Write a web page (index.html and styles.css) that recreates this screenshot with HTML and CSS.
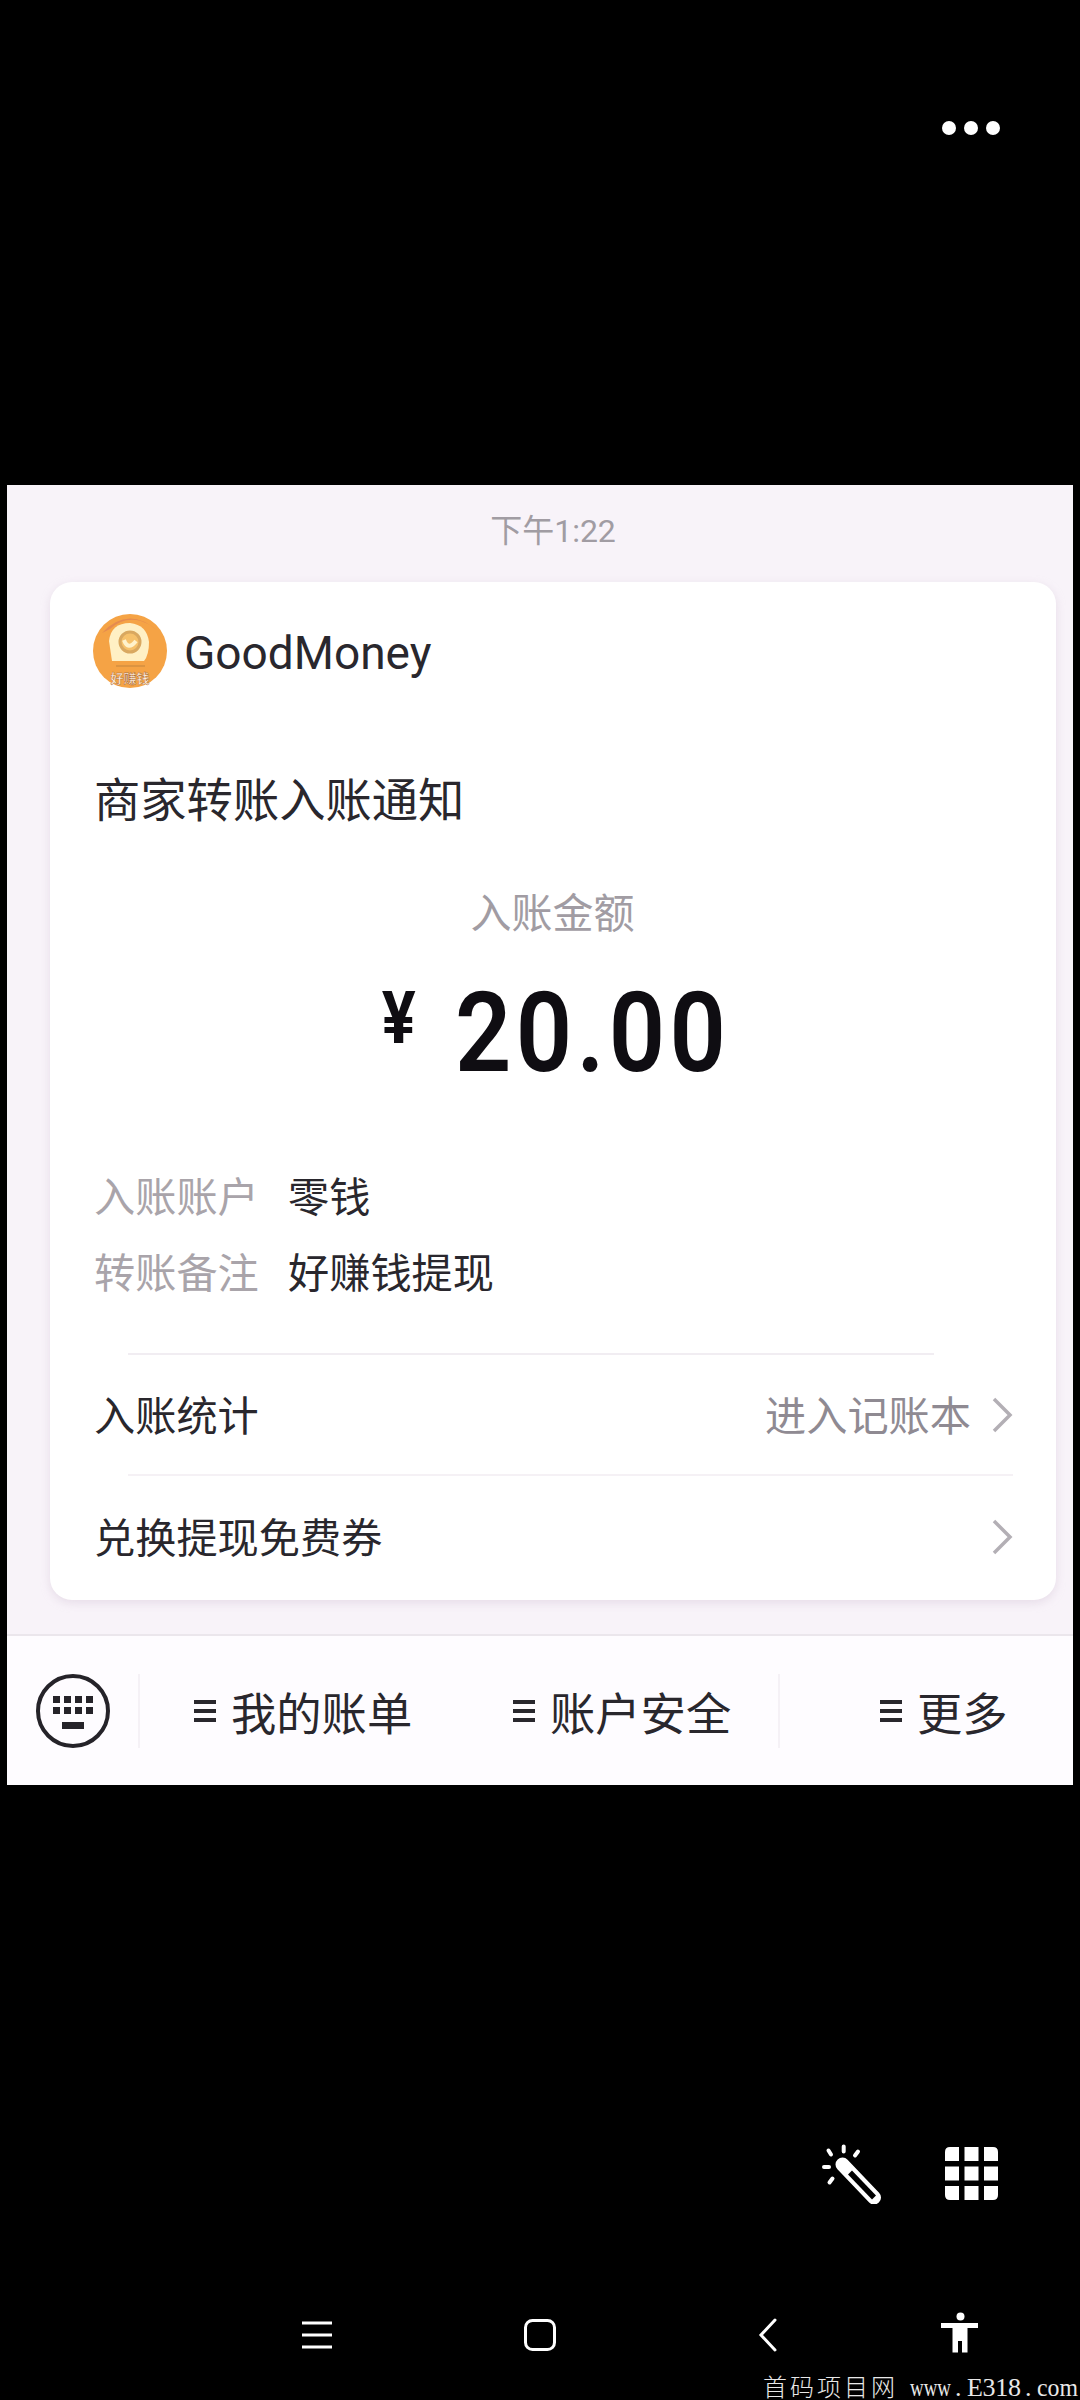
FILE: index.html
```html
<!DOCTYPE html>
<html lang="zh-CN">
<head>
<meta charset="utf-8">
<title>商家转账入账通知</title>
<link rel="stylesheet" href="styles.css">
</head>
<body>
<header class="topbar">
  <svg width="60" height="20" viewBox="0 0 60 20" fill="#fff"><circle cx="8" cy="10" r="7"/><circle cx="30" cy="10" r="7"/><circle cx="52" cy="10" r="7"/></svg>
</header>
<main class="panel">
  <div class="time">下午1:22</div>
  <section class="card">
    <div class="brand">
      <svg width="76" height="76" viewBox="0 0 76 76">
        <defs><clipPath id="disc"><circle cx="38" cy="38" r="37"/></clipPath></defs>
        <circle cx="38" cy="38" r="37" fill="#f5a345"/>
        <g clip-path="url(#disc)">
          <path d="M10 20Q36-8 66 18L58 12Q36 0 18 16Z" fill="#e58b50"/>
          <path d="M20 48L17 28Q19 10 38 10Q55 12 57 29Q57 42 52 48Z" fill="#fff0c4"/>
          <circle cx="38" cy="29" r="10" fill="#f6c16b" stroke="#d9a860" stroke-width="3"/>
          <path d="M32 27Q36 38 44 28" fill="none" stroke="#fff2cb" stroke-width="4"/>
          <path d="M24 53h29" stroke="#dc9441" stroke-width="2"/>
        </g>
        <text x="38" y="70" text-anchor="middle" class="brand-mark">好赚钱</text>
      </svg>
      <span class="brand-name">GoodMoney</span>
    </div>
    <h1 class="title">商家转账入账通知</h1>
    <div class="caption">入账金额</div>
    <div class="amount"><span class="yen">¥</span><span class="value">20.00</span></div>
    <dl class="details">
      <dt>入账账户</dt><dd>零钱</dd>
      <dt>转账备注</dt><dd>好赚钱提现</dd>
    </dl>
    <div class="row row-first"><span class="label">入账统计</span><span class="link"><span class="label">进入记账本</span><svg class="chev" width="22" height="36" viewBox="0 0 22 36"><path d="M3 2L19 18L3 34"/></svg></span></div>
    <div class="row"><span class="label">兑换提现免费券</span><span class="link"><svg class="chev" width="22" height="36" viewBox="0 0 22 36"><path d="M3 2L19 18L3 34"/></svg></span></div>
  </section>
  <nav class="menu">
    <div class="key">
      <svg width="76" height="76" viewBox="0 0 76 76" fill="#252329">
        <circle cx="38" cy="38" r="35" fill="none" stroke="#252329" stroke-width="4"/>
        <path d="M18 23h7v7h-7zM29 23h7v7h-7zM40 23h7v7h-7zM51 23h7v7h-7zM18 34h7v7h-7zM29 34h7v7h-7zM40 34h7v7h-7zM51 34h7v7h-7zM27 49h22v7H27z"/>
      </svg>
    </div>
    <div class="item bill"><svg width="24" height="26" viewBox="0 0 24 26"><path d="M1 4h22M1 13h22M1 22h22"/></svg><span>我的账单</span></div>
    <div class="item safe"><svg width="24" height="26" viewBox="0 0 24 26"><path d="M1 4h22M1 13h22M1 22h22"/></svg><span>账户安全</span></div>
    <div class="item more"><svg width="24" height="26" viewBox="0 0 24 26"><path d="M1 4h22M1 13h22M1 22h22"/></svg><span>更多</span></div>
  </nav>
</main>
<div class="tools">
  <svg width="62" height="62" viewBox="0 0 62 62" fill="none" stroke="#fff" stroke-linecap="round">
    <path d="M23.700 4.500v5M8.500 8.500l2.500 4M38 9.500l-3 4M4 25h5M12.500 36.500l-3 4" stroke-width="4"/>
    <path d="M22.500 22.500L54 55.500" stroke-width="14"/>
    <path d="M30 30.500L54 55.500" stroke="#000" stroke-width="5.500" stroke-linecap="butt"/>
  </svg>
  <svg width="53" height="53" viewBox="0 0 53 53" fill="#fff">
    <path d="M5 0h9v14H0V5Q0 0 5 0zM19.500 0h14v14h-14zM39 0h9q5 0 5 5v9H39zM0 19.500h14v14H0zM19.500 19.500h14v14h-14zM39 19.500h14v14H39zM0 39h14v14H5q-5 0-5-5zM19.500 39h14v14h-14zM39 39h14v9q0 5-5 5h-9z"/>
  </svg>
</div>
<footer class="sysnav">
  <svg width="30" height="30" viewBox="0 0 30 30" fill="none" stroke="#fff" stroke-width="3"><path d="M0 3h30M0 15h30M0 27h30"/></svg>
  <svg class="home" width="32" height="32" viewBox="0 0 32 32" fill="none" stroke="#fff" stroke-width="3"><rect x="1.500" y="1.500" width="29" height="29" rx="7"/></svg>
  <svg class="back" width="20" height="34" viewBox="0 0 20 34" fill="none" stroke="#fff" stroke-width="3" stroke-linecap="round"><path d="M17 2L3 17L17 32"/></svg>
  <svg class="person" width="38" height="41" viewBox="0 0 38 41" fill="#fff"><circle cx="19.500" cy="4.500" r="4"/><path d="M0 11h37v5H26.500v24.500h-5.500V29h-4v11.500H11.500V16H0z"/></svg>
</footer>
<div class="watermark">
  <svg width="317" height="27" viewBox="0 0 317 27">
    <text class="wm-cn" x="0" y="23" textLength="132" lengthAdjust="spacing">首码项目网</text>
    <text x="147" y="23" textLength="41" lengthAdjust="spacingAndGlyphs">www</text>
    <text x="192" y="23">.</text>
    <text x="204" y="23" textLength="54" lengthAdjust="spacing">E318</text>
    <text x="262" y="23">.</text>
    <text x="274" y="23" textLength="41" lengthAdjust="spacingAndGlyphs">com</text>
  </svg>
</div>
</body>
</html>
```
FILE: styles.css
```css
* { box-sizing: border-box; }
body {
  margin: 0;
  width: 1080px;
  height: 2400px;
  background: #000;
  font-family: Roboto, "Noto Sans CJK SC", sans-serif;
  color: #29272d;
  display: flex;
  flex-direction: column;
  overflow: hidden;
}
svg { display: block; flex: none; }
.topbar {
  height: 485px;
  flex: none;
  padding: 118px 79px 0 0;
  display: flex;
  justify-content: flex-end;
  align-items: flex-start;
}
.panel {
  width: 1066px;
  height: 1300px;
  flex: none;
  margin-left: 7px;
  background: #f8f3f9;
  display: flex;
  flex-direction: column;
}
.time {
  height: 97px;
  padding: 25px 18px 0 44px;
  line-height: 42px;
  font-size: 32px;
  color: #a19ca3;
  text-align: center;
}
.card {
  width: 1006px;
  height: 1018px;
  margin-left: 43px;
  padding: 31px 43px 0 44px;
  border-radius: 22px;
  background: #fff;
  box-shadow: 0 3px 10px rgba(205, 188, 208, .4);
}
.brand {
  height: 76px;
  display: flex;
  align-items: center;
  gap: 16px;
  margin-left: -2px;
}
.brand-name { font-size: 46px; line-height: 60px; padding-top: 4px; }
.brand-mark { font-size: 13px; font-weight: 700; fill: #fff0df; stroke: #a9652d; stroke-width: .4; }
.title { margin: 82px 0 0; font-size: 46.300px; line-height: 60px; font-weight: 400; }
.caption {
  margin-top: 53px;
  padding-right: 2px;
  font-size: 41px;
  line-height: 60px;
  text-align: center;
  color: #a19ca3;
}
.amount {
  margin-top: 24px;
  height: 110px;
  padding-left: 285px;
  display: flex;
  align-items: flex-start;
  gap: 32px;
  color: #0f0d12;
}
.yen { font-size: 72px; line-height: 84px; padding-top: 9px; width: 44px; font-weight: 700; transform: scaleX(.88); }
.value {
  font-size: 111px;
  line-height: 130px;
  font-weight: 600;
  letter-spacing: 4.800px;
  transform: scaleX(.89);
  transform-origin: left;
}
.details {
  display: grid;
  grid-template-columns: 194px 1fr;
  grid-auto-rows: 76px;
  margin: 90px 0 0;
  height: 185px;
  font-size: 41.200px;
  line-height: 60px;
}
.details dt { color: #a9a4aa; }
.details dd { margin: 0; }
.row {
  height: 121px;
  display: flex;
  justify-content: space-between;
  align-items: center;
  font-size: 41.200px;
  line-height: 60px;
}
.row-first {
  height: 123px;
  background:
    linear-gradient(#f1edf2, #f1edf2) 34px 0 / 806px 2px no-repeat,
    linear-gradient(#f5f1f5, #f5f1f5) 34px 100% / 885px 2px no-repeat;
}
.label { padding-top: 4px; }
.link { display: flex; align-items: center; gap: 20px; color: #8f8a92; }
.chev { fill: none; stroke: #b3afb5; stroke-width: 3.500; }
.menu {
  margin-top: 34px;
  height: 151px;
  border-top: 2px solid #ebe6ec;
  background: #fefcff;
  display: flex;
  align-items: center;
  font-size: 45.300px;
}
.key {
  width: 133px;
  height: 74px;
  padding-left: 28px;
  border-right: 2px solid #f5f1f6;
  display: flex;
  align-items: center;
}
.item { display: flex; align-items: center; gap: 14px; height: 74px; line-height: 62px; }
.item span { padding-top: 10px; }
.item svg { stroke: #29272d; stroke-width: 4; fill: none; }
.bill { margin-left: 53px; width: 319px; }
.safe { width: 268px; border-right: 2px solid #f5f1f6; }
.more { margin-left: 99px; }
.tools {
  height: 510px;
  flex: none;
  padding: 357px 82px 0 820px;
  display: flex;
  justify-content: space-between;
  align-items: flex-start;
}
.tools svg + svg { margin-top: 5px; }
.sysnav {
  height: 78px;
  flex: none;
  padding: 2px 0 0 302px;
  display: flex;
  align-items: center;
}
.home { margin-left: 192px; }
.back { margin-left: 202px; }
.person { margin-left: 163px; margin-top: -6px; }
.watermark { height: 27px; flex: none; display: flex; justify-content: flex-end; }
.watermark svg { overflow: visible; }
.watermark text {
  fill: #e8e8e8;
  font-family: "Liberation Serif", serif;
  font-size: 26px;
}
.watermark .wm-cn { font-family: "Noto Sans CJK SC", sans-serif; font-size: 24px; font-weight: 300; }
```
